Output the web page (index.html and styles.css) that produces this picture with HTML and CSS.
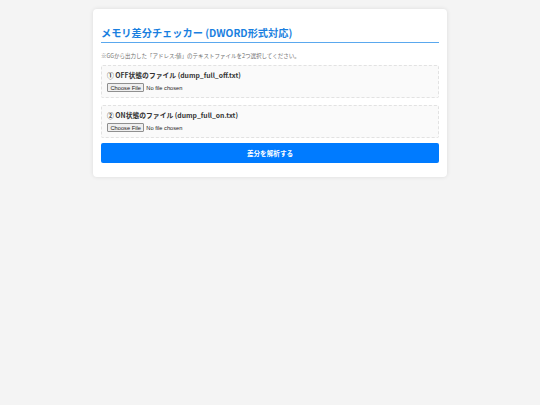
FILE: index.html
```html
<!DOCTYPE html>
<html lang="ja">
<head>
    <meta charset="UTF-8">
    <meta name="viewport" content="width=device-width, initial-scale=1.0">
    <title>メモリ差分チェッカー</title>
    <link rel="stylesheet" href="styles.css">
</head>
<body>
    <div class="container">
        <h2>メモリ差分チェッカー (DWORD形式対応)</h2>
        <p class="note">※GGから出力した「アドレス:値」のテキストファイルを2つ選択してください。</p>
        <div class="file-group">
            <label for="fileOff">① OFF状態のファイル (dump_full_off.txt)</label>
            <input type="file" id="fileOff" accept=".txt">
        </div>
        <div class="file-group">
            <label for="fileOn">② ON状態のファイル (dump_full_on.txt)</label>
            <input type="file" id="fileOn" accept=".txt">
        </div>
        <button class="run">差分を解析する</button>
        <div class="result" id="result"></div>
    </div>
</body>
</html>
```

FILE: styles.css
```css
body {
    font-family: "Noto Sans CJK JP", "Noto Sans", sans-serif;
    margin: 0;
    padding: 9px 10px;
    background-color: #f4f4f4;
}
.container {
    max-width: 338px;
    margin: auto;
    background: white;
    padding: 17px 8px 14px;
    border-radius: 4px;
    box-shadow: 0 0 4px rgba(0, 0, 0, 0.1);
}
h2 {
    color: #1a7fe0;
    font-size: 10.2px;
    line-height: 14px;
    margin: 0;
    padding-bottom: 2px;
    border-bottom: 1px solid #5aa8ee;
}
.note {
    font-size: 5.5px;
    line-height: 8px;
    color: #6f6f6f;
    margin: 9px 0 5px;
}
.file-group {
    margin-bottom: 7px;
    padding: 4px 5px 5px;
    border: 1px dashed #e2e2e2;
    border-radius: 2px;
    background-color: #fafafa;
}
label {
    display: block;
    font-size: 6.8px;
    line-height: 10px;
    font-weight: bold;
    color: #333;
    margin-bottom: 3px;
}
input[type="file"] {
    display: block;
    height: 9px;
    font-family: "Liberation Sans", Arial, sans-serif;
    font-size: 5.7px;
    line-height: 9px;
    color: #222;
}
input[type="file"]::file-selector-button {
    height: 9px;
    padding: 0 2.5px;
    margin-right: 2px;
    font-size: 5.7px;
    border: 1px solid #8f8f8f;
    border-radius: 1px;
    background-color: #efefef;
    color: #222;
}
.run {
    display: block;
    width: 100%;
    height: 20px;
    margin-top: -2px;
    font-family: "Noto Sans CJK JP", sans-serif;
    font-size: 6.6px;
    font-weight: bold;
    background-color: #007bff;
    color: white;
    border: none;
    border-radius: 2px;
    cursor: pointer;
}
```
